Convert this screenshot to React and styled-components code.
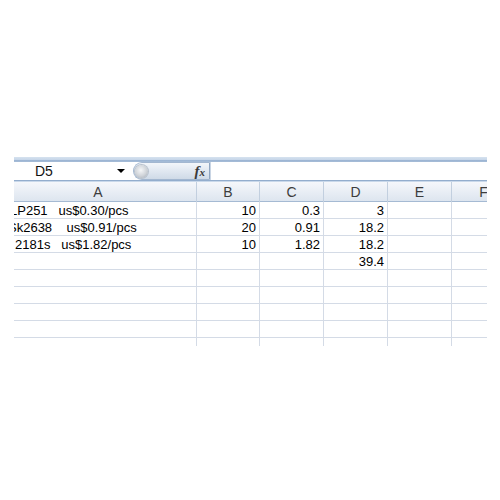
import styled, { createGlobalStyle } from "styled-components";

const Global = createGlobalStyle`
  body {
    margin: 0;
    background: #fff;
    font-family: "Liberation Sans", Arial, sans-serif;
  }
`;

const COLS = "183px 63px 64px 64px 64px 64px";

const Viewport = styled.div`
  margin: 157px 0 0 14px;
  width: 473px;
  overflow: hidden;
`;

const TopBand = styled.div`
  height: 5px;
  background: linear-gradient(#d6e2ef 0, #c6d6e9 55%, #98b2d1 55%, #a7bdd8 100%);
`;

const FormulaRow = styled.div`
  display: flex;
  height: 18px;
  background: #fff;
`;

const NameBox = styled.div`
  width: 116px;
  box-sizing: border-box;
  display: flex;
  align-items: center;
  justify-content: space-between;
  padding: 0 5px 0 21px;
  font-size: 14px;
  color: #111;
`;

const Arrow = styled.span`
  width: 0;
  height: 0;
  border-left: 4px solid transparent;
  border-right: 4px solid transparent;
  border-top: 4px solid #000;
`;

const FxButton = styled.div`
  margin-left: 3px;
  width: 77px;
  box-sizing: border-box;
  border: 1px solid #a3b7d0;
  border-right-color: #8fa6c2;
  border-radius: 9px 0 0 9px;
  background: linear-gradient(#f3f6fa, #dde5ef 60%, #cfdae7);
  display: flex;
  align-items: center;
  justify-content: space-between;
  padding: 0 4px 0 1px;
`;

const Knob = styled.span`
  width: 13px;
  height: 13px;
  border-radius: 50%;
  background: radial-gradient(circle at 45% 40%, #f6f7f8 0, #cfd3d8 55%, #9ea5ae 100%);
  box-shadow: 0 0 0 1px #b9c2cd;
`;

const Fx = styled.span`
  font-family: "Liberation Serif", "Times New Roman", serif;
  font-style: italic;
  font-weight: bold;
  font-size: 15px;
  line-height: 1;
  color: #3a3a3a;
  small {
    font-size: 11px;
  }
`;

const FormulaInput = styled.div`
  flex: 1;
  border-left: 1px solid #c9d5e4;
  background: #fff;
`;

const Divider = styled.div`
  height: 1px;
  border-top: 1px solid #93adcd;
  background: #c9d8ea;
`;

const Grid = styled.div`
  display: grid;
  grid-template-columns: ${COLS};
`;

const HeaderRow = styled(Grid)`
  height: 20px;
  box-sizing: border-box;
  background: linear-gradient(#f5f7fb, #e9eef5 50%, #dde5ef);
  border-bottom: 1px solid #a5bad3;
`;

const HeaderCell = styled.div`
  border-right: 1px solid #c2cfdf;
  text-align: center;
  color: #3c3c3c;
  font-size: 14px;
  line-height: 20px;
  padding-right: ${(p) => p.$shift || 0}px;
`;

const Row = styled(Grid)`
  height: ${(p) => (p.$tail ? 8 : 17)}px;
  box-sizing: border-box;
  border-bottom: ${(p) => (p.$tail ? "none" : "1px solid #d4dbe6")};
`;

const Cell = styled.div`
  border-right: 1px solid #d4dbe6;
  overflow: hidden;
  white-space: pre;
  font-size: 13px;
  line-height: 16px;
  padding: 1px 3px 0;
  color: #000;
  text-align: ${(p) => (p.$text ? "left" : "right")};
`;

const Indent = styled.span`
  display: inline-block;
`;

const rows = [
  { a: "LP251   us$0.30/pcs", shift: -7, b: "10", c: "0.3", d: "3" },
  { a: "Sk2638    us$0.91/pcs", shift: -9, b: "20", c: "0.91", d: "18.2" },
  { a: "2181s   us$1.82/pcs", shift: -2, b: "10", c: "1.82", d: "18.2" },
  { a: "", b: "", c: "", d: "39.4" },
  {}, {}, {}, {},
];

export default function App() {
  return (
    <>
      <Global />
      <Viewport>
        <TopBand />
        <FormulaRow>
          <NameBox>
            D5
            <Arrow />
          </NameBox>
          <FxButton>
            <Knob />
            <Fx>f<small>x</small></Fx>
          </FxButton>
          <FormulaInput />
        </FormulaRow>
        <Divider />
        <HeaderRow>
          <HeaderCell $shift={14}>A</HeaderCell>
          <HeaderCell>B</HeaderCell>
          <HeaderCell>C</HeaderCell>
          <HeaderCell>D</HeaderCell>
          <HeaderCell>E</HeaderCell>
          <HeaderCell>F</HeaderCell>
        </HeaderRow>
        {rows.map((r, i) => (
          <Row key={i}>
            <Cell $text>
              {r.a ? <Indent style={{ marginLeft: r.shift }}>{r.a}</Indent> : null}
            </Cell>
            <Cell>{r.b}</Cell>
            <Cell>{r.c}</Cell>
            <Cell>{r.d}</Cell>
            <Cell />
            <Cell />
          </Row>
        ))}
        <Row $tail>
          <Cell $text />
          <Cell />
          <Cell />
          <Cell />
          <Cell />
          <Cell />
        </Row>
      </Viewport>
    </>
  );
}
